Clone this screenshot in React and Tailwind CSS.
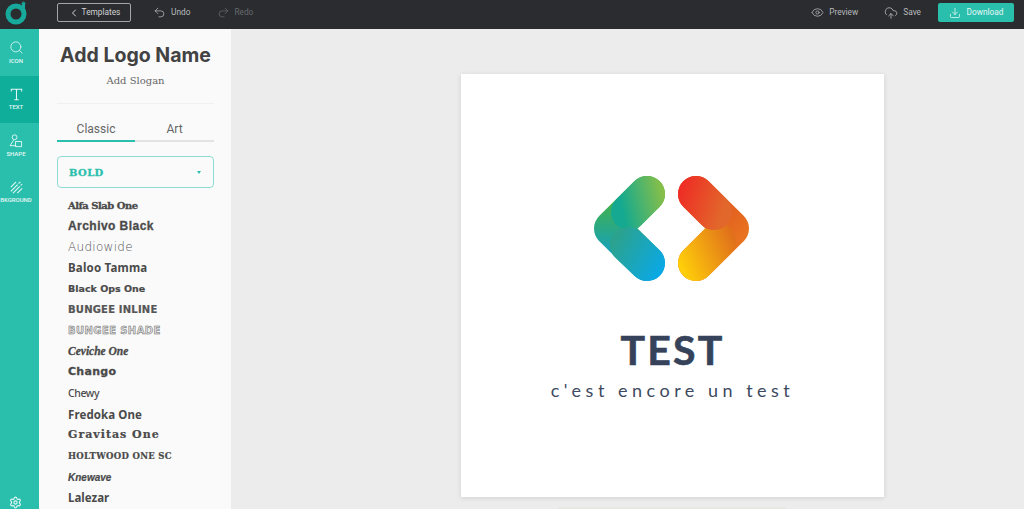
import React from "react";
import { ChevronLeft, Undo2, Redo2, Eye, CloudUpload, Download, Search, Settings } from "lucide-react";

const fonts = [
  { name: "Alfa Slab One", cls: "font-['DejaVu_Serif'] font-bold text-[10px] tracking-[-0.5px] [-webkit-text-stroke:0.3px_#4a4a4a]" },
  { name: "Archivo Black", cls: "font-['Liberation_Sans'] font-bold text-[12px] tracking-[0.45px] [-webkit-text-stroke:0.3px_#4a4a4a]" },
  { name: "Audiowide", cls: "font-['DejaVu_Sans'] font-light text-[12px] text-[#555] tracking-[0.3px]" },
  { name: "Baloo Tamma", cls: "font-['Noto_Sans'] font-bold text-[11.5px] tracking-[0.2px]" },
  { name: "Black Ops One", cls: "font-['DejaVu_Sans'] font-bold text-[9.5px] [-webkit-text-stroke:0.2px_#4a4a4a]" },
  { name: "BUNGEE INLINE", cls: "font-['DejaVu_Sans'] font-bold text-[10px] tracking-[0.2px] text-[#555] [-webkit-text-stroke:0.2px_#555]" },
  { name: "BUNGEE SHADE", cls: "font-['DejaVu_Sans'] font-bold text-[10px] tracking-[0.4px] text-[#e4e4e4] [-webkit-text-stroke:0.5px_#666]" },
  { name: "Ceviche One", cls: "font-['Liberation_Serif'] font-bold italic text-[11.5px] [-webkit-text-stroke:0.3px_#4a4a4a]" },
  { name: "Chango", cls: "font-['DejaVu_Sans'] font-bold text-[11px] tracking-[0.3px] [-webkit-text-stroke:0.3px_#4a4a4a]" },
  { name: "Chewy", cls: "font-['Noto_Sans'] font-medium text-[10.5px] tracking-[-0.4px]" },
  { name: "Fredoka One", cls: "font-['Noto_Sans'] font-bold text-[11.5px] tracking-[0.1px]" },
  { name: "Gravitas One", cls: "font-['DejaVu_Serif'] font-bold text-[11px] tracking-[1px] [-webkit-text-stroke:0.2px_#4a4a4a]" },
  { name: "HOLTWOOD ONE SC", cls: "font-['DejaVu_Serif'] font-bold text-[8.5px] tracking-[0.3px] [-webkit-text-stroke:0.2px_#4a4a4a]" },
  { name: "Knewave", cls: "font-['Liberation_Sans'] font-bold italic text-[10px] [-webkit-text-stroke:0.2px_#4a4a4a]" },
  { name: "Lalezar", cls: "font-['Noto_Sans'] font-bold text-[11.5px]" },
];

const TextIcon = () => (
  <svg width="13" height="13" viewBox="0 0 15 15" fill="none" stroke="currentColor" strokeWidth="1.2">
    <path d="M1.5 4V1.5h12V4M7.5 1.5v12M5 13.5h5" />
  </svg>
);

const ShapeIcon = () => (
  <svg width="14" height="14" viewBox="0 0 15 15" fill="none" stroke="currentColor" strokeWidth="1">
    <circle cx="6" cy="3.5" r="2.6" />
    <path d="M5 6.500 1.200 12.500h6.500M7 8h6.500v5.500H7z" />
  </svg>
);

const HatchIcon = () => (
  <svg width="13" height="13" viewBox="0 0 15 15" fill="none" stroke="currentColor" strokeWidth="1.2" strokeDasharray="11 1.500">
    <path d="M1 7 7 1M1 12 12 1M3.500 14 14 3.500M8.500 14 14 8.500" />
  </svg>
);

const tools = [
  { label: "ICON", icon: <Search size={15} strokeWidth={1.3} /> },
  { label: "TEXT", icon: <TextIcon />, active: true },
  { label: "SHAPE", icon: <ShapeIcon /> },
  { label: "BKGROUND", icon: <HatchIcon /> },
];

const BrandLogo = () => (
  <svg width="26" height="26" viewBox="0 0 26 26" fill="none">
    <circle cx="13" cy="14" r="8" stroke="#17a99b" strokeWidth="5" />
    <path d="M20.500 14V4" stroke="#17a99b" strokeWidth="3" strokeLinecap="round" />
    <circle cx="20.500" cy="3.500" r="1.500" stroke="#17a99b" strokeWidth="1" />
  </svg>
);

const ChevronLogo = () => (
  <svg width="157" height="107" viewBox="594 175 157 107" fill="none" strokeWidth="36" strokeLinecap="round" strokeLinejoin="round">
    <defs>
      <linearGradient id="leftBase" gradientUnits="userSpaceOnUse" x1="620" y1="180" x2="620" y2="280">
        <stop offset="0.2" stopColor="#43b247" />
        <stop offset="0.85" stopColor="#0b9cd6" />
      </linearGradient>
      <linearGradient id="leftTop" gradientUnits="userSpaceOnUse" x1="620" y1="200" x2="665" y2="190">
        <stop offset="0" stopColor="#14a990" />
        <stop offset="1" stopColor="#8dc044" />
      </linearGradient>
      <linearGradient id="leftBottom" gradientUnits="userSpaceOnUse" x1="615" y1="240" x2="665" y2="270">
        <stop offset="0" stopColor="#2ba28e" />
        <stop offset="1" stopColor="#09a9ea" />
      </linearGradient>
      <linearGradient id="rightBase" gradientUnits="userSpaceOnUse" x1="700" y1="190" x2="745" y2="235">
        <stop offset="0" stopColor="#dd4a22" />
        <stop offset="1" stopColor="#e8731f" />
      </linearGradient>
      <linearGradient id="rightTop" gradientUnits="userSpaceOnUse" x1="680" y1="190" x2="725" y2="205">
        <stop offset="0" stopColor="#ee2d25" />
        <stop offset="1" stopColor="#e2672b" />
      </linearGradient>
      <linearGradient id="rightBottom" gradientUnits="userSpaceOnUse" x1="680" y1="265" x2="735" y2="240">
        <stop offset="0" stopColor="#ffce0a" />
        <stop offset="1" stopColor="#e0701b" />
      </linearGradient>
    </defs>
    <path d="M647 194 612 228.500 647 263" stroke="url(#leftBase)" />
    <path d="M647 194 629 212" stroke="url(#leftTop)" />
    <path d="M647 263 628 245" stroke="url(#leftBottom)" />
    <path d="M696 194 731 228.500 696 263" stroke="url(#rightBase)" />
    <path d="M696 263 718 241" stroke="url(#rightBottom)" />
    <path d="M696 194 714 212" stroke="url(#rightTop)" />
  </svg>
);

export default function App() {
  return (
    <div className="h-screen flex flex-col overflow-hidden bg-[#ececec] font-['Roboto',sans-serif]">
      {/* Top bar */}
      <header className="h-[29px] shrink-0 bg-[#2a2c30] flex items-start text-[8.3px] text-[#b9babc]">
        <div className="w-[57px] pl-[3px]">
          <BrandLogo />
        </div>
        <button className="mt-[3px] w-[74px] h-[19px] flex items-center justify-center gap-[2px] border border-[#a5a6a8] rounded-[2px] text-[#d2d3d4]">
          <ChevronLeft size={12} strokeWidth={2} />
          Templates
        </button>
        <div className="ml-[22px] mt-[4px] h-[17px] flex items-center gap-[5px]">
          <Undo2 size={13} strokeWidth={1.4} />
          Undo
        </div>
        <div className="ml-[27px] mt-[4px] h-[17px] flex items-center gap-[4px] text-[#67696c]">
          <Redo2 size={13} strokeWidth={1.4} />
          Redo
        </div>
        <div className="ml-auto mt-[4px] h-[17px] flex items-center gap-[5px]">
          <Eye size={13} strokeWidth={1.4} />
          Preview
        </div>
        <div className="ml-[26px] mt-[4px] h-[17px] flex items-center gap-[5px]">
          <CloudUpload size={14} strokeWidth={1.4} />
          Save
        </div>
        <button className="ml-[17px] mr-[10px] mt-[3px] w-[76px] h-[19px] flex items-center justify-center gap-[6px] bg-[#2abfad] rounded-[2px] text-[#e6f7f5]">
          <Download size={12} strokeWidth={1.6} />
          Download
        </button>
      </header>

      <div className="flex-1 flex min-h-0">
        {/* Tool rail */}
        <nav className="w-[39px] shrink-0 bg-[#2abfad] flex flex-col text-[#e4f7f4] overflow-hidden">
          {tools.map((tool) => (
            <div
              key={tool.label}
              className={`h-[46.8px] pr-[7px] flex flex-col items-center justify-center gap-[1px] ${tool.active ? "bg-[#0fae9b]" : ""}`}
            >
              {tool.icon}
              <span className="text-[6px] leading-[9px] font-medium whitespace-nowrap">{tool.label}</span>
            </div>
          ))}
          <div className="mt-auto pr-[8px] flex justify-center">
            <Settings size={13} strokeWidth={2} />
          </div>
        </nav>

        {/* Font panel */}
        <aside className="w-[192px] shrink-0 bg-[#fafafa] pl-[18px] pr-[17px] overflow-hidden">
          <h1 className="mt-[13px] text-center whitespace-nowrap font-['Inter'] font-bold text-[19.5px] leading-[26px] text-[#424242]">
            Add Logo Name
          </h1>
          <p className="mt-[6px] text-center font-['DejaVu_Serif'] text-[10px] leading-[14px] text-[#666]">Add Slogan</p>
          <div className="mt-[15px] h-px bg-[#f0f0f0]" />
          <div className="mt-[15px] flex text-[12px] leading-[20px] text-[#666]">
            <div className="w-[78px] h-[23px] text-center border-b-2 border-[#2abfad]">Classic</div>
            <div className="flex-1 h-[23px] text-center border-b-2 border-[#e3e3e3]">Art</div>
          </div>
          <div className="mt-[14px] h-[32px] border border-[#8fdcd2] rounded-[4px] flex items-center justify-between pl-[11px] pr-[12px]">
            <span className="font-['DejaVu_Serif'] font-bold text-[10px] tracking-[0.4px] text-[#2abfad] [-webkit-text-stroke:0.3px_#2abfad]">BOLD</span>
            <span className="w-0 h-0 border-x-[2.5px] border-x-transparent border-t-[3px] border-t-[#2abfad]" />
          </div>
          <ul className="mt-[7px] pl-[11px] text-[#4a4a4a]">
            {fonts.map((font) => (
              <li key={font.name} className={`h-[20.9px] flex items-center whitespace-nowrap ${font.cls}`}>
                {font.name}
              </li>
            ))}
          </ul>
        </aside>

        {/* Canvas */}
        <main className="flex-1 pl-[230px] pt-[45px] overflow-hidden">
          <div className="w-[423px] h-[423px] bg-white shadow-[0_1px_5px_rgba(0,0,0,0.12)] flex flex-col items-center pt-[101px]">
            <ChevronLogo />
            <div className="mt-[45px] font-['Lato'] font-bold text-[41px] leading-[46px] tracking-[2.2px] text-[#35425a] [-webkit-text-stroke:0.6px_#35425a]">TEST</div>
            <div className="mt-[6px] font-['Lato'] text-[18px] leading-[22px] tracking-[4.5px] text-[#3d4a60]">c'est encore un test</div>
          </div>
          <div className="mt-[10px] ml-[97px] w-[228px] h-[2px] bg-[#e8e8e2]" />
        </main>
      </div>
    </div>
  );
}
